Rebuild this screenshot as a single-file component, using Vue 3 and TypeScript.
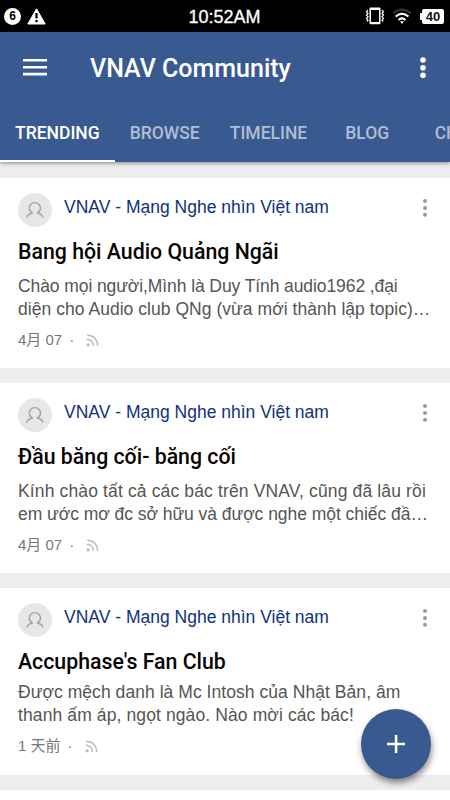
<script setup lang="ts">
interface Post {
  title: string
  lines: string[]
  day: string
  compact?: boolean
}

const tabs: string[] = ['TRENDING', 'BROWSE', 'TIMELINE', 'BLOG', 'CHAT']

const posts: Post[] = [
  {
    title: 'Bang hội Audio Quảng Ngãi',
    lines: ['Chào mọi người,Mình là Duy Tính audio1962 ,đại', 'diện cho Audio club QNg (vừa mới thành lập topic)…'],
    day: '4月 07',
  },
  {
    title: 'Đầu băng cối- băng cối',
    lines: ['Kính chào tất cả các bác trên VNAV, cũng đã lâu rồi', 'em ước mơ đc sở hữu và được nghe một chiếc đầ…'],
    day: '4月 07',
  },
  {
    title: "Accuphase's Fan Club",
    lines: ['Được mệch danh là Mc Intosh của Nhật Bản, âm', 'thanh ấm áp, ngọt ngào. Nào mời các bác!'],
    day: '1 天前',
    compact: true,
  },
]
</script>

<template>
  <div class="screen">
    <div class="status">
      <div class="status-side">
        <span class="count">6</span>
        <svg class="warn" width="19" height="17" viewBox="0 0 19 17">
          <path d="M9.5 .8 18.2 16H.8z" fill="#fff" stroke="#fff" stroke-linejoin="round" />
          <path d="M9.5 5v5.6M9.5 12v2.2" stroke="#000" stroke-width="2.2" />
        </svg>
      </div>
      <span class="clock">10:52AM</span>
      <div class="status-side right">
        <svg width="20" height="18" viewBox="0 0 20 18" fill="none" stroke="#fff">
          <rect x="5.2" y="1.2" width="9.6" height="15.4" rx=".6" stroke-width="1.5" />
          <path d="M5 2h10M5 16h10" stroke-width="2" />
          <path d="M3 3 1.5 4.7 3 6.4 1.5 8.1 3 9.8 1.5 11.5 3 13.2 1.8 14.5M17 3l1.5 1.7L17 6.4l1.5 1.7L17 9.8l1.5 1.7-1.5 1.7 1.2 1.3" stroke-width="1.2" />
        </svg>
        <svg class="wifi" width="20" height="17" viewBox="0 0 20 17" fill="none" stroke="#fff" stroke-width="2">
          <path d="M1 5.3Q10-2.3 19 5.3" stroke="#333" />
          <path d="M3.6 8.6q6.4-5.8 12.8 0M6.5 12q3.5-3.2 7 0" />
          <path d="M8 13.2h4L10 16z" fill="#fff" stroke="none" />
        </svg>
        <span class="battery">40</span>
      </div>
    </div>

    <header class="header">
      <div class="toolbar">
        <svg class="menu" width="24" height="17" viewBox="0 0 24 17" fill="#fff">
          <path d="M0 0h24v2.6H0zM0 7h24v2.6H0zM0 13.8h24v2.6H0z" />
        </svg>
        <h1>VNAV Community</h1>
        <svg class="more" width="6" height="22" viewBox="0 0 6 22" fill="#fff">
          <circle cx="3" cy="3" r="2.8" /><circle cx="3" cy="10.7" r="2.8" /><circle cx="3" cy="18.2" r="2.8" />
        </svg>
      </div>
      <nav class="tabs">
        <span v-for="(tab, i) in tabs" :key="tab" class="tab" :class="{ active: i === 0 }">{{ tab }}</span>
      </nav>
    </header>

    <main class="feed">
      <article v-for="(post, i) in posts" :key="i" class="card" :class="[`post-${i}`, { compact: post.compact }]">
        <div class="byline">
          <svg class="avatar" width="34" height="34" viewBox="0 0 34 34">
            <circle cx="17" cy="17" r="17" fill="#e7e7e7" />
            <g fill="none" stroke="#a2a2a2" stroke-width="1.4">
              <path d="M14.4 20c-1.9-1-3.1-2.8-3.1-4.9 0-3.2 2.5-5.5 5.6-5.5s5.6 2.3 5.6 5.5c0 2.1-1.2 3.9-3.1 4.9" />
              <path d="M8.7 24.6c1-2.5 3-4.1 6.2-4.8M25.1 24.6c-1-2.5-3-4.1-6.2-4.8" />
            </g>
          </svg>
          <span class="author">VNAV - Mạng Nghe nhìn Việt nam</span>
          <svg class="options" width="6" height="20" viewBox="0 0 6 20" fill="#999">
            <circle cx="3" cy="3" r="2" /><circle cx="3" cy="10" r="2" /><circle cx="3" cy="16.8" r="2" />
          </svg>
        </div>
        <h2>{{ post.title }}</h2>
        <p class="excerpt">
          <span v-for="(line, n) in post.lines" :key="n" :class="`line-${n}`">{{ line }}</span>
        </p>
        <div class="meta">
          <span class="day">{{ post.day }}</span>
          <span class="dot">·</span>
          <svg width="13" height="13" viewBox="0 0 13 13" fill="none" stroke="#bbb" stroke-width="1.4">
            <circle cx="2.1" cy="10.8" r="1.6" fill="#bbb" stroke="none" />
            <path d="M.8 5.2c3.8 0 6.6 2.8 6.6 6.8M1.2 1.2C7.5 1.2 11.7 5.8 11.7 12" />
          </svg>
        </div>
      </article>
      <div class="card"></div>
    </main>

    <button class="fab" aria-label="+">
      <svg width="18" height="18" viewBox="0 0 18 18" fill="#fff"><path d="M7.8 0h2.6v7.8H18v2.5h-7.6V18H7.8v-7.7H0V7.8h7.8z" /></svg>
    </button>
  </div>
</template>

<style>
body { margin: 0; overflow: hidden; }
</style>

<style scoped>
.screen {
  position: relative;
  display: flex;
  flex-direction: column;
  width: 450px;
  height: 800px;
  overflow: hidden;
  background: #ededed;
  font-family: "Liberation Sans", "Noto Sans CJK SC", sans-serif;
}
.status {
  display: flex;
  align-items: center;
  justify-content: space-between;
  height: 32px;
  flex: none;
  box-sizing: border-box;
  padding: 0 6px 0 4px;
  background: #000;
  color: #fff;
}
.status-side { display: flex; align-items: center; width: 80px; gap: 6px; }
.status-side.right { justify-content: flex-end; gap: 7px; }
.count {
  width: 17px;
  height: 17px;
  border-radius: 50%;
  background: #fff;
  color: #000;
  font-size: 12px;
  line-height: 17px;
  font-weight: bold;
  text-align: center;
}
.clock { font-size: 18px; line-height: 32px; -webkit-text-stroke: .3px #fff; padding: 2px 0 0 1px; }
.battery {
  position: relative;
  width: 22px;
  height: 15px;
  margin-left: 3px;
  border-radius: 2px;
  background: #fff;
  color: #111;
  font-size: 13px;
  line-height: 16px;
  font-weight: bold;
  text-align: center;
}
.battery::before { content: ""; position: absolute; left: -2px; top: 4px; width: 2px; height: 7px; background: #fff; }
.header {
  position: relative;
  z-index: 1;
  flex: none;
  height: 130px;
  background: #395991;
  box-shadow: 0 1px 4px rgba(0, 0, 0, .45);
  font-family: Roboto, sans-serif;
}
.toolbar { display: flex; align-items: center; height: 72px; padding: 0 24px 0 23px; }
.menu { margin-top: -1px; }
h1 { margin: 2px 0 0 43px; flex: 1; color: #fff; font-size: 25px; line-height: 36px; font-weight: 500; white-space: nowrap; }
.tabs { display: flex; height: 58px; overflow: hidden; }
.tab {
  flex: none;
  box-sizing: border-box;
  height: 58px;
  min-width: 90px;
  padding: 0 15px;
  color: #b0bdd3;
  font-size: 17.5px;
  line-height: 58px;
  font-weight: 500;
  text-align: center;
  white-space: nowrap;
}
.tab.active { color: #fff; border-bottom: 2px solid #fff; }
.feed { padding-top: 16px; display: flex; flex-direction: column; gap: 15px; }
.card { box-sizing: border-box; height: 190px; flex: none; padding: 15px 18px 0; background: #fff; }
.card.compact { height: 186.5px; }
.byline { display: flex; height: 34px; align-items: flex-start; }
.avatar { flex: none; }
.author { flex: 1; margin-left: 12px; color: #0e3180; font-size: 17.5px; line-height: 28px; white-space: nowrap; }
.options { margin: 5px 4px 0 0; }
h2 { margin: 10px 0 0; font-family: Roboto, sans-serif; color: #080404; font-size: 21.3px; line-height: 29px; font-weight: 500; white-space: nowrap; }
.excerpt { display: flex; flex-direction: column; align-items: flex-start; margin: 9px 0 0; color: #555; font-size: 17.5px; line-height: 23px; white-space: nowrap; }
.post-0 .line-0 { letter-spacing: -.09px; }
.post-0 .line-1 { letter-spacing: .04px; }
.post-1 .line-0 { letter-spacing: .14px; }
.post-1 .line-1 { letter-spacing: -.04px; }
.post-2 .line-0 { letter-spacing: .05px; }
.post-2 .line-1 { letter-spacing: .11px; }
.compact .excerpt { margin-top: 5px; }
.meta { display: flex; align-items: center; margin-top: 8px; height: 22px; color: #777; font-size: 15px; line-height: 22px; }
.dot { margin: 0 12px 0 7px; }
.fab {
  position: absolute;
  left: 361px;
  top: 709px;
  z-index: 2;
  display: flex;
  align-items: center;
  justify-content: center;
  width: 70px;
  height: 70px;
  padding: 0;
  border: 0;
  border-radius: 50%;
  background: #395991;
  box-shadow: 1px 4px 6px rgba(0, 0, 0, .45);
}
</style>
